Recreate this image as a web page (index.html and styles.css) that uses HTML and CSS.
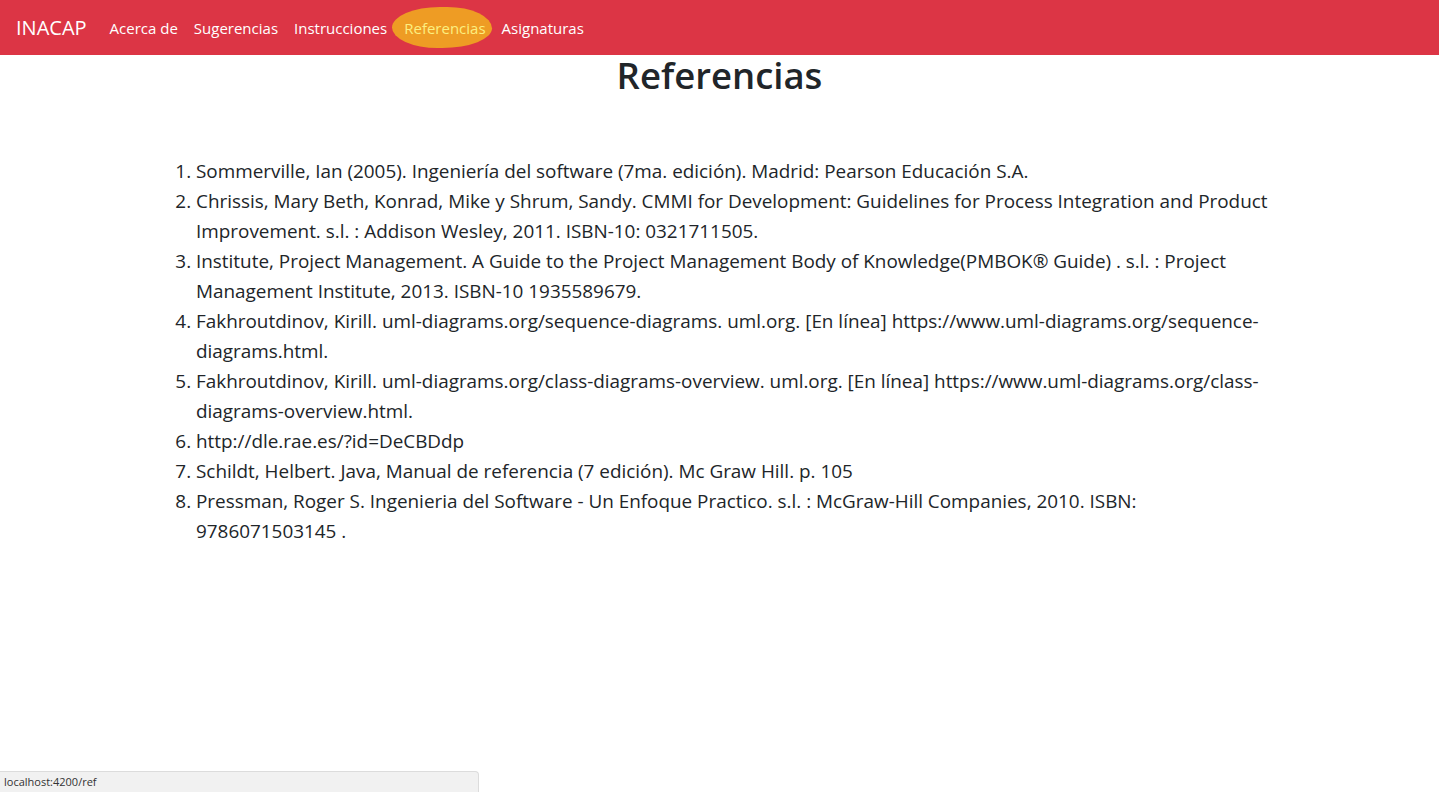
FILE: index.html
```html
<!DOCTYPE html>
<html lang="es">
<head>
<meta charset="utf-8">
<title>Referencias</title>
<link rel="stylesheet" href="styles.css">
</head>
<body>
<nav class="navbar">
  <a class="brand" href="#">INACAP</a>
  <ul class="nav">
    <li><a class="nav-link" href="#">Acerca de</a></li>
    <li><a class="nav-link" href="#">Sugerencias</a></li>
    <li><a class="nav-link" href="#">Instrucciones</a></li>
    <li><a class="nav-link active" href="#">Referencias</a></li>
    <li><a class="nav-link" href="#">Asignaturas</a></li>
  </ul>
</nav>
<main class="page">
  <h1 class="title">Referencias</h1>
  <ol class="refs">
    <li>Sommerville, Ian (2005). Ingeniería del software (7ma. edición). Madrid: Pearson Educación S.A.</li>
    <li>Chrissis, Mary Beth, Konrad, Mike y Shrum, Sandy. CMMI for Development: Guidelines for Process Integration and Product Improvement. s.l. : Addison Wesley, 2011. ISBN-10: 0321711505.</li>
    <li>Institute, Project Management. A Guide to the Project Management Body of Knowledge(PMBOK® Guide) . s.l. : Project Management Institute, 2013. ISBN-10 1935589679.</li>
    <li>Fakhroutdinov, Kirill. uml-diagrams.org/sequence-diagrams. uml.org. [En línea] https://www.uml-diagrams.org/sequence-diagrams.html.</li>
    <li>Fakhroutdinov, Kirill. uml-diagrams.org/class-diagrams-overview. uml.org. [En línea] https://www.uml-diagrams.org/class-diagrams-overview.html.</li>
    <li>http://dle.rae.es/?id=DeCBDdp</li>
    <li>Schildt, Helbert. Java, Manual de referencia (7 edición). Mc Graw Hill. p. 105</li>
    <li>Pressman, Roger S. Ingenieria del Software - Un Enfoque Practico. s.l. : McGraw-Hill Companies, 2010. ISBN: 9786071503145 .</li>
  </ol>
</main>
<div class="status">localhost:4200/ref</div>
</body>
</html>
```
FILE: styles.css
```css
* { box-sizing: border-box; }
html, body { margin: 0; padding: 0; }
body {
  font-family: "Open Sans", "Noto Sans", sans-serif;
  color: #212529;
  background: #fff;
  font-size: 16px;
}
.navbar {
  display: flex;
  align-items: center;
  height: 55px;
  padding: 0 16px;
  background: #dc3545;
}
.brand {
  color: #fff;
  text-decoration: none;
  font-size: 20px;
  margin-right: 15px;
}
.nav {
  display: flex;
  align-items: center;
  list-style: none;
  margin: 0;
  padding: 0;
}
.nav-link {
  display: block;
  color: #fff;
  text-decoration: none;
  font-size: 15px;
  line-height: 24px;
  padding: 8px 8px;
}
.nav-link.active {
  color: #fcef80;
  background: #ee9c24;
  border-radius: 48% 45% 50% 46% / 50% 52% 48% 50%;
  padding: 9px 6px 8px 12px;
  margin: 0 2px 0 -3px;
}
.title {
  text-align: center;
  font-size: 36.5px;
  font-weight: 600;
  line-height: 40px;
  margin: 0 0 61px;
}
.refs {
  margin: 0 0 0 156px;
  padding-left: 40px;
  width: 1118px;
  font-size: 18.9px;
  line-height: 30px;
}
.status {
  position: fixed;
  left: 0;
  bottom: 0;
  width: 479px;
  height: 21px;
  background: #f1f1f1;
  border: 1px solid #dcdcdc;
  border-left: none;
  border-bottom: none;
  border-top-right-radius: 4px;
  font-size: 11px;
  line-height: 20px;
  padding-left: 4px;
  color: #333;
}
```
